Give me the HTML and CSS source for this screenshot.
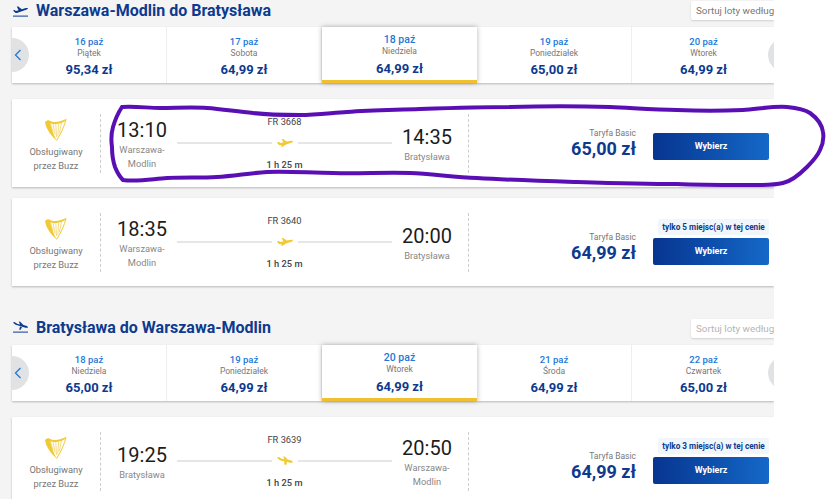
FILE: index.html
```html
<!DOCTYPE html>
<html lang="pl">
<head>
    <meta charset="UTF-8">
    <meta name="viewport" content="width=device-width, initial-scale=1.0">
    <title>Wybierz lot</title>
    <link rel="stylesheet" href="styles.css">
</head>
<body>
    <!-- Shared icons -->
    <svg class="icon-defs" width="0" height="0">
        <symbol id="harp" viewBox="0 0 22 24">
            <path d="M5.5 6.5 8 15M8 7 10 17.5M10.8 7.4 11.5 20M13.6 7 12.8 19M16.4 6 14.4 16" stroke="#f6dc85" stroke-width="1" fill="none"/>
            <path d="M0 5C2 3 4 2.8 5 4 5.6 10 8 16 11.5 23.5 6 18.5 1 12 0 5Z" fill="#f1c933"/>
            <path d="M4.5 3.4C9 6.6 16 4.4 21.5 1.8 20.8 3.8 19 5 17 5.8 12 7.6 7.6 7.6 5 6Z" fill="#f1c933"/>
            <path d="M21 2.5C19.5 9 16 16.5 11.5 23.5" stroke="#f1c933" stroke-width="1" fill="none"/>
        </symbol>
        <symbol id="plane-out" viewBox="0 0 16 9">
            <path d="M0 4.2 1.8 4 3.4 5 6.4 4.4 4.6 1 6 1 9.8 3.6 13 3C14.4 2.6 15.8 2.8 16 3.2 15.8 4 14.6 4.8 13 5.2L9 6.4 5.6 8.8 3.8 8.8 5 7.2 3 7.2C1.8 7 .6 5.6 0 4.2Z" fill="#f1c933"/>
        </symbol>
        <symbol id="plane-in" viewBox="0 0 16 9">
            <path d="M0 1.4 1.8 1 4.6 2.8 7.4 3.2 6.2.4 7.8.6 10.6 3.6 13.4 4.2C14.8 4.6 16 5.4 16 6.2 15.2 6.8 13.6 6.8 12.2 6.4L10 5.8 9.4 8.8 7.4 8.8 7.2 5.2 3.6 4.4C2.2 3.8.8 2.4 0 1.4Z" fill="#f1c933"/>
        </symbol>
        <symbol id="chevron" viewBox="0 0 8 12">
            <path d="M6.5 1 1.5 6l5 5" stroke="#2277d8" stroke-width="1.3" fill="none"/>
        </symbol>
        <symbol id="sort-arrow" viewBox="0 0 6 4">
            <path d="M.5.5 3 3 5.5.5" stroke="#777" stroke-width="1" fill="none"/>
        </symbol>
    </svg>

    <main class="page">
        <!-- Outbound -->
        <section class="leg">
            <header class="leg-head">
                <svg class="leg-icon" viewBox="0 0 15 12">
                    <path d="M0 5.6 1.4 5 3 6 5.6 5.2 3.8 1.6 5.2 1.4 8.8 4.2 12 3.2C13.4 2.8 14.6 2.8 15 3.2 14.8 4 13.6 4.6 12.4 5L4.6 7.8C3.4 8.2 2.6 8 2 7.4Z" fill="#0d3a8e"/>
                    <rect y="10.6" width="15" height="1" fill="#0d3a8e"/>
                </svg>
                <h2>Warszawa-Modlin do Bratysława</h2>
                <div class="sort">Sortuj loty według<svg class="sort-arrow"><use href="#sort-arrow"/></svg></div>
            </header>

            <div class="dates">
                <div class="date-btn date-prev"><svg width="8" height="12"><use href="#chevron"/></svg></div>
                <div class="date"><span class="day-num">16 paź</span><span class="day-name">Piątek</span><span class="day-price">95,34 zł</span></div>
                <div class="date"><span class="day-num">17 paź</span><span class="day-name">Sobota</span><span class="day-price">64,99 zł</span></div>
                <div class="date date-active"><span class="day-num">18 paź</span><span class="day-name">Niedziela</span><span class="day-price">64,99 zł</span></div>
                <div class="date"><span class="day-num">19 paź</span><span class="day-name">Poniedziałek</span><span class="day-price">65,00 zł</span></div>
                <div class="date"><span class="day-num">20 paź</span><span class="day-name">Wtorek</span><span class="day-price">64,99 zł</span></div>
                <div class="date-btn date-next"></div>
            </div>

            <article class="flight">
                <div class="carrier">
                    <svg class="harp"><use href="#harp"/></svg>
                    <p>Obsługiwany<br>przez Buzz</p>
                </div>
                <div class="route">
                    <div class="stop"><span class="time">13:10</span><span class="city">Warszawa-<br>Modlin</span></div>
                    <div class="middle">
                        <span class="number">FR 3668</span>
                        <div class="track"><svg class="plane"><use href="#plane-out"/></svg></div>
                        <span class="duration">1 h 25 m</span>
                    </div>
                    <div class="stop"><span class="time">14:35</span><span class="city">Bratysława</span></div>
                </div>
                <div class="fare">
                    <div class="price"><span class="fare-name">Taryfa Basic</span><span class="amount">65,00 zł</span></div>
                    <div class="choose"><button class="select">Wybierz</button></div>
                </div>
            </article>

            <article class="flight">
                <div class="carrier">
                    <svg class="harp"><use href="#harp"/></svg>
                    <p>Obsługiwany<br>przez Buzz</p>
                </div>
                <div class="route">
                    <div class="stop"><span class="time">18:35</span><span class="city">Warszawa-<br>Modlin</span></div>
                    <div class="middle">
                        <span class="number">FR 3640</span>
                        <div class="track"><svg class="plane"><use href="#plane-out"/></svg></div>
                        <span class="duration">1 h 25 m</span>
                    </div>
                    <div class="stop"><span class="time">20:00</span><span class="city">Bratysława</span></div>
                </div>
                <div class="fare fare-tagged">
                    <div class="price"><span class="fare-name">Taryfa Basic</span><span class="amount">64,99 zł</span></div>
                    <div class="choose"><span class="seats">tylko 5 miejsc(a) w tej cenie</span><button class="select">Wybierz</button></div>
                </div>
            </article>
        </section>

        <!-- Return -->
        <section class="leg leg-return">
            <header class="leg-head">
                <svg class="leg-icon" viewBox="0 0 15 12">
                    <path d="M0 1.4 1.4 1 4.6 3 7 3.4 5.8.6 7.2.8 10.4 4 13 4.8C14.2 5.2 15 5.8 15 6.6 14.2 7 12.8 6.8 11.6 6.4L3.6 4C2.4 3.6.8 2.4 0 1.4Z" fill="#0d3a8e"/>
                    <path d="M7 5.6 9 6.2 7.6 8.8 6.2 8.8Z" fill="#0d3a8e"/>
                    <rect y="10.6" width="15" height="1" fill="#0d3a8e"/>
                </svg>
                <h2>Bratysława do Warszawa-Modlin</h2>
                <div class="sort sort-muted">Sortuj loty według<svg class="sort-arrow"><use href="#sort-arrow"/></svg></div>
            </header>

            <div class="dates">
                <div class="date-btn date-prev"><svg width="8" height="12"><use href="#chevron"/></svg></div>
                <div class="date"><span class="day-num">18 paź</span><span class="day-name">Niedziela</span><span class="day-price">65,00 zł</span></div>
                <div class="date"><span class="day-num">19 paź</span><span class="day-name">Poniedziałek</span><span class="day-price">64,99 zł</span></div>
                <div class="date date-active"><span class="day-num">20 paź</span><span class="day-name">Wtorek</span><span class="day-price">64,99 zł</span></div>
                <div class="date"><span class="day-num">21 paź</span><span class="day-name">Środa</span><span class="day-price">64,99 zł</span></div>
                <div class="date"><span class="day-num">22 paź</span><span class="day-name">Czwartek</span><span class="day-price">65,00 zł</span></div>
                <div class="date-btn date-next"></div>
            </div>

            <article class="flight">
                <div class="carrier">
                    <svg class="harp"><use href="#harp"/></svg>
                    <p>Obsługiwany<br>przez Buzz</p>
                </div>
                <div class="route">
                    <div class="stop"><span class="time">19:25</span><span class="city">Bratysława</span></div>
                    <div class="middle">
                        <span class="number">FR 3639</span>
                        <div class="track"><svg class="plane"><use href="#plane-in"/></svg></div>
                        <span class="duration">1 h 25 m</span>
                    </div>
                    <div class="stop"><span class="time">20:50</span><span class="city">Warszawa-<br>Modlin</span></div>
                </div>
                <div class="fare fare-tagged">
                    <div class="price"><span class="fare-name">Taryfa Basic</span><span class="amount">64,99 zł</span></div>
                    <div class="choose"><span class="seats">tylko 3 miejsc(a) w tej cenie</span><button class="select">Wybierz</button></div>
                </div>
            </article>
        </section>
    </main>

    <!-- Hand-drawn marker over the first flight -->
    <svg class="marker" viewBox="0 0 826 499">
        <path d="M122 107C135 106 148 108 160 108 176 108 192 107 207 108 223 109 238 112 253 113 269 115 284 115 300 115 316 115 331 113 347 112 372 110 396 110 420 109 450 108 480 107 510 107 544 106 578 106 610 107 633 108 655 110 677 110 699 111 721 111 743 110 758 109 773 106 787 107 796 108 804 109 810 113 817 118 822 125 823 132 824 138 823 144 820 150 817 157 812 162 807 167 800 174 792 181 783 183 770 186 756 185 743 185 721 185 699 185 677 184 644 184 610 183 577 182 544 181 510 180 477 178 454 177 432 174 410 173 384 172 359 174 333 173 311 173 289 171 267 172 250 173 234 176 217 177 200 178 184 177 167 178 152 179 137 182 123 180 119 176 117 172 115 167 113 161 112 154 112 147 111 140 111 134 113 127 115 120 118 113 122 107Z"/>
    </svg>
</body>
</html>
```

FILE: styles.css
```css
/* Global Styling */
html,
body {
    margin: 0;
    height: 499px;
    overflow: hidden;
    background-color: #fff;
}
body {
    font-family: Roboto, "Liberation Sans", sans-serif;
    position: relative;
}
.icon-defs {
    position: absolute;
}
.page {
    width: 774px;
    height: 499px;
    padding-top: 1px;
    box-sizing: border-box;
    background-color: #f4f4f4;
    overflow: hidden;
}
.leg {
    margin-bottom: 33px;
}

/* Section header */
.leg-head {
    display: flex;
    align-items: center;
    height: 19px;
    margin-bottom: 7px;
    padding-left: 13px;
}
.leg-icon {
    width: 15px;
    height: 12px;
    margin-right: 8px;
}
.leg-head h2 {
    margin: 0;
    font-size: 16px;
    font-weight: 700;
    color: #0d3a8e;
    flex: 1;
}
.leg-return .leg-icon,
.leg-return h2 {
    margin-bottom: 3px;
}
.sort {
    width: 83px;
    height: 19px;
    padding-left: 5px;
    box-sizing: border-box;
    background-color: #fff;
    border-radius: 2px 0 0 2px;
    box-shadow: 0 1px 2px rgba(0, 0, 0, 0.15);
    font-size: 9.8px;
    line-height: 19px;
    color: #777;
    white-space: nowrap;
    overflow: hidden;
}
.sort-muted {
    color: #b5b5b5;
}
.sort-arrow {
    width: 6px;
    height: 4px;
    margin-left: 2px;
    vertical-align: 1px;
}

/* Date strip */
.dates {
    position: relative;
    display: flex;
    height: 56px;
    margin: 0 0 16px 12px;
    background-color: #fff;
    box-shadow: 0 1px 2px rgba(0, 0, 0, 0.25);
}
.date {
    width: 155px;
    flex: none;
    display: flex;
    flex-direction: column;
    align-items: center;
    padding-top: 9px;
    box-sizing: border-box;
    border-right: 1px solid #eee;
}
.date:nth-child(6) {
    border-right: 0;
    width: 143px;
}
.date-active {
    height: 56px;
    padding-top: 7px;
    border-right: 0;
    border-bottom: 3px solid #f1c02f;
    box-shadow: 0 0 5px rgba(0, 0, 0, 0.3);
    z-index: 1;
}
.day-num {
    font-size: 9.5px;
    line-height: 11px;
    font-weight: 500;
    color: #2277d8;
}
.date-active .day-num {
    font-size: 10.5px;
}
.day-name {
    font-size: 8.5px;
    line-height: 12px;
    color: #777;
}
.day-price {
    margin-top: 2px;
    font-size: 13px;
    line-height: 18px;
    font-weight: 700;
    color: #0d3a8e;
}
.date-active .day-price {
    margin-top: 3px;
}
.date-btn {
    position: absolute;
    top: 11px;
    width: 17px;
    height: 34px;
    z-index: 2;
}
.date-prev {
    left: 0;
    background-color: #e1e2e4;
    border-radius: 0 17px 17px 0;
    display: flex;
    align-items: center;
    padding-left: 2px;
    box-sizing: border-box;
}
.date-next {
    right: 0;
    width: 6px;
    overflow: hidden;
}
.date-next::before {
    content: "";
    display: block;
    width: 34px;
    height: 34px;
    border-radius: 50%;
    background-color: #e1e2e4;
}

/* Flight card */
.flight {
    display: flex;
    height: 88px;
    margin: 0 0 11px 12px;
    background-color: #fff;
    box-shadow: 0 1px 2px rgba(0, 0, 0, 0.25);
}
.carrier {
    width: 88px;
    height: 59px;
    margin-top: 15px;
    border-right: 1px dashed #ccc;
    text-align: center;
    display: flex;
    flex-direction: column;
    align-items: center;
}
.harp {
    width: 22px;
    height: 24px;
    margin-top: 3px;
}
.carrier p {
    margin: 4px 0 0;
    font-size: 9.3px;
    line-height: 13.5px;
    color: #777;
}
.route {
    width: 368px;
    height: 59px;
    margin-top: 15px;
    padding: 0 11px;
    box-sizing: border-box;
    border-right: 1px dashed #ccc;
    display: flex;
}
.stop {
    width: 60px;
    flex: none;
    display: flex;
    flex-direction: column;
    align-items: center;
    justify-content: center;
    padding-top: 1px;
    text-align: center;
}
.time {
    font-size: 20px;
    line-height: 24px;
    color: #1c1c1c;
}
.city {
    margin-top: 1px;
    font-size: 9.3px;
    line-height: 13.5px;
    color: #888;
}
.middle {
    flex: 1;
    margin: 0 5px;
    display: flex;
    flex-direction: column;
    align-items: center;
}
.number {
    font-size: 9.3px;
    line-height: 12px;
    color: #444;
    margin-top: 2px;
}
.track {
    align-self: stretch;
    height: 9px;
    margin-top: 10px;
    display: flex;
    align-items: center;
    gap: 5px;
}
.track::before,
.track::after {
    content: "";
    flex: 1;
    height: 2px;
    background-color: #e6e6e6;
}
.plane {
    width: 16px;
    height: 9px;
}
.duration {
    margin-top: 12px;
    font-size: 9.3px;
    line-height: 12px;
    font-weight: 500;
    color: #444;
}
.fare {
    flex: 1;
    display: flex;
    justify-content: flex-end;
    padding-right: 5px;
    gap: 17px;
}
.price {
    display: flex;
    flex-direction: column;
    align-items: flex-end;
    padding-top: 29px;
}
.fare-tagged .price {
    padding-top: 34px;
}
.fare-name {
    font-size: 8.5px;
    line-height: 11px;
    color: #777;
}
.amount {
    font-size: 18px;
    line-height: 20px;
    font-weight: 700;
    color: #0d3a8e;
}
.choose {
    width: 116px;
    display: flex;
    flex-direction: column;
    align-items: flex-end;
    justify-content: flex-end;
    padding-bottom: 27px;
}
.fare-tagged .choose {
    padding-bottom: 21px;
}
.seats {
    width: 111px;
    height: 16px;
    margin-bottom: 3px;
    background-color: #f1f6fb;
    border-radius: 2px;
    font-size: 8.2px;
    line-height: 16px;
    font-weight: 700;
    text-align: center;
    color: #0d3a8e;
    white-space: nowrap;
}
.select {
    width: 116px;
    height: 27px;
    padding: 0 0 2px;
    border: 0;
    border-radius: 2px;
    background: linear-gradient(to right, #073590, #1468c8);
    font-family: inherit;
    font-size: 9px;
    font-weight: 700;
    color: #fff;
}

/* Marker scribble */
.marker {
    position: absolute;
    left: 0;
    top: 0;
    width: 826px;
    height: 499px;
    pointer-events: none;
}
.marker path {
    fill: none;
    stroke: #5a0fb5;
    stroke-width: 4;
}
```
